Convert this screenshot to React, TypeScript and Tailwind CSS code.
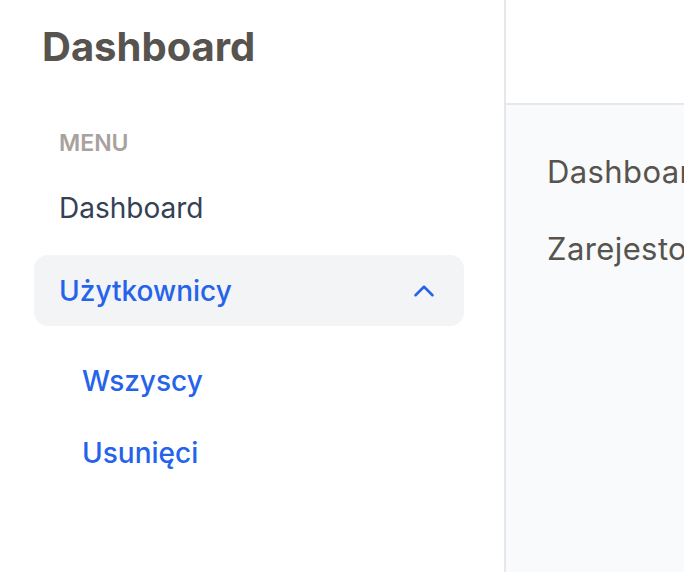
import { ChevronUp } from "lucide-react"

export default function App() {
  return (
    <div className="flex h-screen w-full overflow-hidden bg-white font-['Inter',sans-serif]">
      <aside className="w-[506px] shrink-0 border-r-2 border-[#e5e7eb] pl-[34px] pr-[40px]">
        <h1 className="ml-[8px] pt-[24px] text-[40px] font-bold leading-[46px] text-[#57534e]">Dashboard</h1>

        <nav className="mt-[59px]">
          <p className="px-[25px] text-[23px] font-semibold leading-[28px] text-[#a8a29e]">MENU</p>
          <a className="mt-[33px] block px-[25px] text-[28px] leading-[36px] text-[#334155]">Dashboard</a>

          <div className="mt-[29px] flex h-[71px] items-center justify-between rounded-[14px] bg-[#f3f4f6] pl-[25px] pr-[23px]">
            <span className="text-[28px] font-medium text-[#2563eb]">Użytkownicy</span>
            <ChevronUp className="h-[34px] w-[34px] text-[#2563eb]" strokeWidth={1.8} />
          </div>

          <div className="mt-[37px] flex flex-col gap-[36px] pl-[48px]">
            <a className="block text-[28px] font-medium leading-[36px] text-[#2563eb]">Wszyscy</a>
            <a className="block text-[28px] font-medium leading-[36px] text-[#2563eb]">Usunięci</a>
          </div>
        </nav>
      </aside>

      <main className="flex min-w-0 flex-1 flex-col bg-[#f9fafb]">
        <header className="h-[105px] shrink-0 border-b-2 border-[#e5e7eb] bg-white" />
        <div className="flex flex-col gap-[41px] whitespace-nowrap px-[41px] pt-[49px] text-[31px] leading-[36px] tracking-[0.4px] text-[#57534e]">
          <p>Dashboard</p>
          <p>Zarejestowani użytkownicy</p>
        </div>
      </main>
    </div>
  )
}
